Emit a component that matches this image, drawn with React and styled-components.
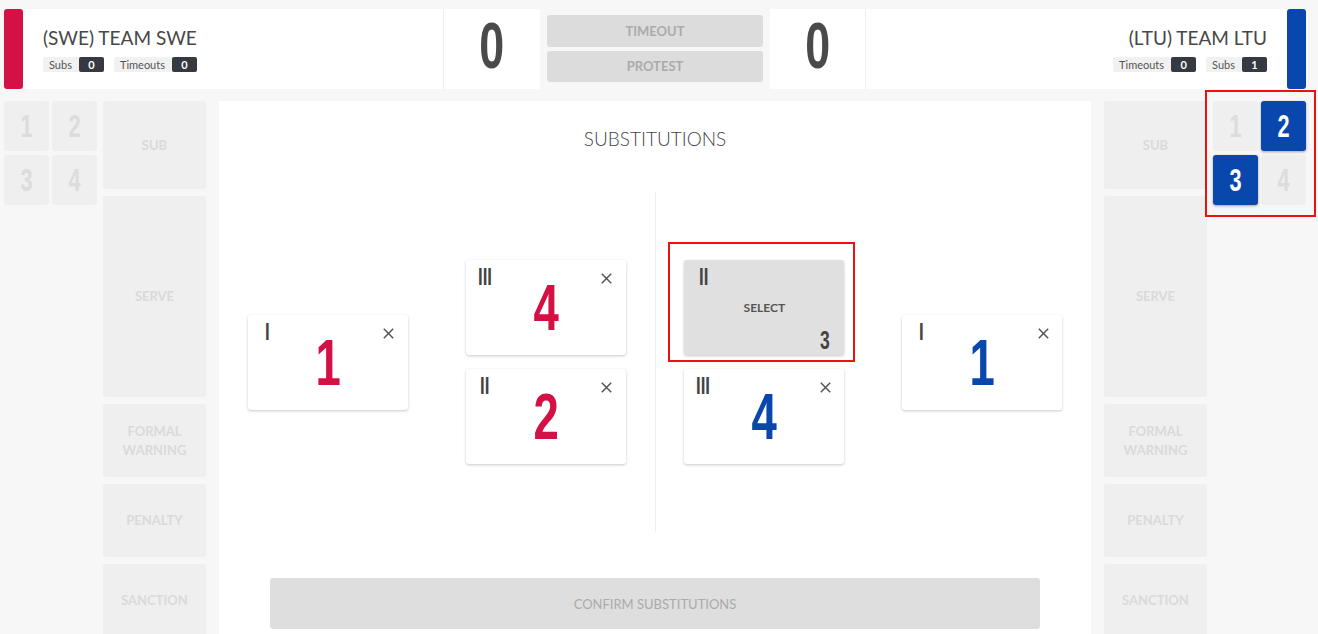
import React from 'react';
import styled, { createGlobalStyle } from 'styled-components';

const RED = '#d31145';
const BLUE = '#0a47ad';
const DIGITS = `"Liberation Sans", Arial, sans-serif`;

const GlobalStyle = createGlobalStyle`
  html, body { margin: 0; padding: 0; background: #f7f7f7; overflow: hidden; }
  body { font-family: Lato, "Open Sans", sans-serif; color: #444; }
  * { box-sizing: border-box; }
`;

const Page = styled.div`
  width: 1302px;
  margin-left: 4px;
  padding-top: 9px;
`;

/* condensed digit text: the app font is a tall narrow face */
const Condensed = styled.span`
  display: inline-block;
  font-family: ${DIGITS};
  font-weight: 700;
  line-height: 1;
  transform: scaleX(${(p) => p.$sx || 0.7});
`;

/* ---------- header ---------- */
const Header = styled.header`
  display: flex;
  height: 80px;
`;

const TeamCard = styled.div`
  width: ${(p) => p.$w}px;
  flex: none;
  background: #fff;
  display: flex;
  flex-direction: ${(p) => (p.$right ? 'row-reverse' : 'row')};
`;

const ColorBar = styled.div`
  width: 19px;
  flex: none;
  background: ${(p) => p.$color};
  border-radius: 3px;
`;

const TeamInfo = styled.div`
  flex: 1;
  display: flex;
  flex-direction: column;
  justify-content: center;
  align-items: ${(p) => (p.$right ? 'flex-end' : 'flex-start')};
  padding: 0 20px;
  gap: 7px;
`;

const TeamName = styled.div`
  font-size: 19px;
  line-height: 24px;
  color: #474747;
`;

const Badges = styled.div`
  display: flex;
  gap: 10px;
`;

const Badge = styled.div`
  display: flex;
  align-items: center;
  height: 15px;
  background: #f1f1f1;
  border-radius: 2px;
  font-size: 11px;
  color: #555;
  padding-left: 6px;
`;

const BadgeCount = styled.span`
  margin-left: 7px;
  height: 15px;
  min-width: 25px;
  background: #343a40;
  color: #fff;
  font-weight: 700;
  border-radius: 2px;
  display: flex;
  align-items: center;
  justify-content: center;
`;

const ScoreBox = styled.div`
  width: ${(p) => p.$w}px;
  flex: none;
  background: #fff;
  display: flex;
  align-items: center;
  justify-content: center;
  padding-bottom: 6px;
  border-left: ${(p) => (p.$right ? 'none' : '1px solid #eee')};
  border-right: ${(p) => (p.$right ? '1px solid #eee' : 'none')};
`;

const Score = styled(Condensed)`
  font-size: 64px;
  color: #4a4a4a;
`;

const CenterButtons = styled.div`
  width: 216px;
  flex: none;
  margin: 0 7px;
  display: flex;
  flex-direction: column;
  gap: 4px;
  padding: 6px 0 7px;
`;

const GrayButton = styled.div`
  flex: 1;
  background: #dcdcdc;
  border-radius: 3px;
  display: flex;
  align-items: center;
  justify-content: center;
  font-size: 13px;
  font-weight: 700;
  color: #ababab;
`;

/* ---------- body ---------- */
const MainRow = styled.div`
  display: flex;
  margin-top: 12px;
  align-items: flex-start;
`;

const SidePanel = styled.div`
  display: flex;
  flex-direction: ${(p) => (p.$right ? 'row-reverse' : 'row')};
  gap: 6px;
  align-items: flex-start;
`;

const TileGrid = styled.div`
  position: relative;
  display: grid;
  grid-template-columns: 45px 45px;
  grid-auto-rows: 50px;
  column-gap: 3px;
  row-gap: 4px;
`;

const Tile = styled.div`
  border-radius: 3px;
  background: ${(p) => (p.$active ? BLUE : '#efefef')};
  color: ${(p) => (p.$active ? '#fff' : '#dcdcdc')};
  box-shadow: ${(p) => (p.$active ? '0 1px 3px rgba(0,0,0,0.35)' : 'none')};
  display: flex;
  align-items: center;
  justify-content: center;
  font-size: 31px;
`;

const Actions = styled.div`
  width: 103px;
  display: flex;
  flex-direction: column;
  gap: 7px;
`;

const ActionButton = styled.div`
  height: ${(p) => p.$h}px;
  background: #efefef;
  border-radius: 3px;
  display: flex;
  align-items: center;
  justify-content: center;
  text-align: center;
  font-size: 13px;
  line-height: 19px;
  font-weight: 700;
  color: #dadada;
  white-space: pre-line;
`;

const MainPanel = styled.main`
  width: 872px;
  height: 560px;
  margin: 0 13px;
  background: #fff;
  display: flex;
  flex-direction: column;
  align-items: center;
  padding-top: 26px;
`;

const Title = styled.h2`
  margin: 0;
  font-size: 19px;
  line-height: 24px;
  font-weight: 300;
  color: #444;
`;

const Field = styled.div`
  width: 100%;
  height: 340px;
  margin-top: 41px;
  display: flex;
`;

const Half = styled.div`
  flex: 1;
  display: flex;
  justify-content: space-around;
  align-items: center;
`;

const Divider = styled.div`
  width: 1px;
  background: #eee;
`;

const CardColumn = styled.div`
  display: flex;
  flex-direction: column;
  gap: 14px;
`;

const Card = styled.div`
  position: relative;
  width: 160px;
  height: 95px;
  border-radius: 3px;
  background: ${(p) => (p.$select ? '#e0e0e0' : '#fff')};
  box-shadow: 0 1px 3px rgba(0, 0, 0, 0.22);
  display: grid;
  grid-template-columns: 38px 1fr 38px;
  grid-template-rows: ${(p) => (p.$select ? '1fr auto 1fr' : '1fr')};
`;

const Numeral = styled(Condensed)`
  grid-column: 1;
  grid-row: 1;
  align-self: start;
  justify-self: center;
  padding-top: 5px;
  font-size: 24px;
  color: #444;
`;

const PlayerNumber = styled(Condensed)`
  grid-column: 2;
  grid-row: 1 / -1;
  align-self: center;
  justify-self: center;
  font-size: 65px;
  color: ${(p) => p.$color};
`;

const CloseBtn = styled.span`
  grid-column: 3;
  grid-row: 1;
  align-self: start;
  justify-self: center;
  margin-top: 13px;
  display: flex;
`;

const SelectLabel = styled.span`
  grid-column: 2;
  grid-row: 2;
  justify-self: center;
  font-size: 12px;
  font-weight: 700;
  color: #555;
`;

const SubNumber = styled(Condensed)`
  grid-column: 3;
  grid-row: 3;
  align-self: end;
  justify-self: center;
  margin-bottom: 2px;
  font-size: 25px;
  color: #444;
`;

const Highlight = styled.div`
  position: absolute;
  top: ${(p) => p.$t}px;
  left: ${(p) => p.$l}px;
  right: ${(p) => p.$r}px;
  bottom: ${(p) => p.$b}px;
  border: 2px solid #f01010;
  pointer-events: none;
`;

const ConfirmButton = styled.div`
  width: 770px;
  height: 51px;
  margin-top: 46px;
  background: #dedede;
  border-radius: 3px;
  display: flex;
  align-items: center;
  justify-content: center;
  font-size: 13px;
  color: #aaa;
`;

const CloseIcon = () => (
  <svg width="11" height="11" viewBox="0 0 11 11">
    <path d="M0.8 0.8 L10.2 10.2 M10.2 0.8 L0.8 10.2" stroke="#555" strokeWidth="1.5" fill="none" />
  </svg>
);

const PlayerCard = ({ numeral, number, color }) => (
  <Card>
    <Numeral>{numeral}</Numeral>
    <PlayerNumber $color={color}>{number}</PlayerNumber>
    <CloseBtn>
      <CloseIcon />
    </CloseBtn>
  </Card>
);

const ACTIONS = [
  { label: 'SUB', h: 88 },
  { label: 'SERVE', h: 201 },
  { label: 'FORMAL\nWARNING', h: 73 },
  { label: 'PENALTY', h: 73 },
  { label: 'SANCTION', h: 73 },
];

const Side = ({ right, active = [], highlight }) => (
  <SidePanel $right={right}>
    <TileGrid>
      {[1, 2, 3, 4].map((n) => (
        <Tile key={n} $active={active.includes(n)}>
          <Condensed>{n}</Condensed>
        </Tile>
      ))}
      {highlight && <Highlight $t={-11} $l={-8} $r={-10} $b={-12} />}
    </TileGrid>
    <Actions>
      {ACTIONS.map((a) => (
        <ActionButton key={a.label} $h={a.h}>
          {a.label}
        </ActionButton>
      ))}
    </Actions>
  </SidePanel>
);

const Team = ({ right, name, color, badges }) => (
  <TeamCard $w={right ? 440 : 439} $right={right}>
    <ColorBar $color={color} />
    <TeamInfo $right={right}>
      <TeamName>{name}</TeamName>
      <Badges>
        {badges.map((b) => (
          <Badge key={b.label}>
            {b.label}
            <BadgeCount>{b.value}</BadgeCount>
          </Badge>
        ))}
      </Badges>
    </TeamInfo>
  </TeamCard>
);

export default function App() {
  return (
    <>
      <GlobalStyle />
      <Page>
        <Header>
          <Team
            name="(SWE) TEAM SWE"
            color={RED}
            badges={[
              { label: 'Subs', value: 0 },
              { label: 'Timeouts', value: 0 },
            ]}
          />
          <ScoreBox $w={97}>
            <Score>0</Score>
          </ScoreBox>
          <CenterButtons>
            <GrayButton>TIMEOUT</GrayButton>
            <GrayButton>PROTEST</GrayButton>
          </CenterButtons>
          <ScoreBox $w={96} $right>
            <Score>0</Score>
          </ScoreBox>
          <Team
            right
            name="(LTU) TEAM LTU"
            color={BLUE}
            badges={[
              { label: 'Timeouts', value: 0 },
              { label: 'Subs', value: 1 },
            ]}
          />
        </Header>

        <MainRow>
          <Side />
          <MainPanel>
            <Title>SUBSTITUTIONS</Title>
            <Field>
              <Half>
                <PlayerCard numeral="I" number="1" color={RED} />
                <CardColumn>
                  <PlayerCard numeral="III" number="4" color={RED} />
                  <PlayerCard numeral="II" number="2" color={RED} />
                </CardColumn>
              </Half>
              <Divider />
              <Half>
                <CardColumn>
                  <Card $select>
                    <Numeral>II</Numeral>
                    <SelectLabel>SELECT</SelectLabel>
                    <SubNumber>3</SubNumber>
                    <Highlight $t={-18} $l={-16} $r={-11} $b={-7} />
                  </Card>
                  <PlayerCard numeral="III" number="4" color={BLUE} />
                </CardColumn>
                <PlayerCard numeral="I" number="1" color={BLUE} />
              </Half>
            </Field>
            <ConfirmButton>CONFIRM SUBSTITUTIONS</ConfirmButton>
          </MainPanel>
          <Side right active={[2, 3]} highlight />
        </MainRow>
      </Page>
    </>
  );
}
